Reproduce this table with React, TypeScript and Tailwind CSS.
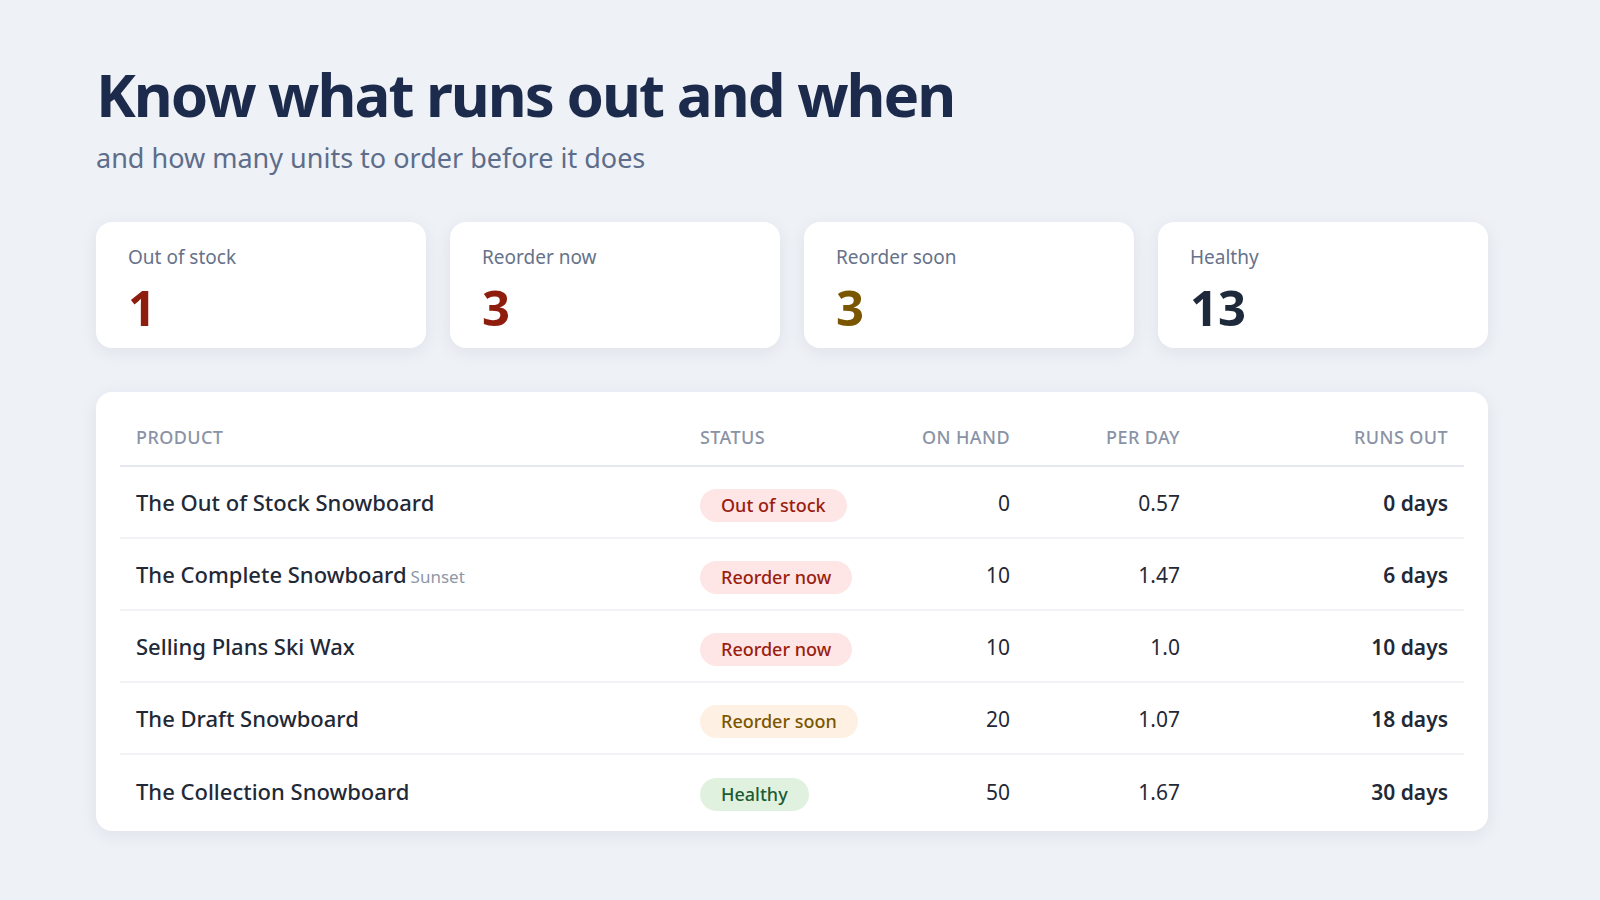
import React from 'react';

type Status = 'out' | 'now' | 'soon' | 'healthy';

interface Row {
  name: string;
  variant?: string;
  status: Status;
  onHand: number;
  perDay: string;
  runsOut: string;
}

const rows: Row[] = [
  { name: 'The Out of Stock Snowboard', status: 'out', onHand: 0, perDay: '0.57', runsOut: '0 days' },
  { name: 'The Complete Snowboard', variant: 'Sunset', status: 'now', onHand: 10, perDay: '1.47', runsOut: '6 days' },
  { name: 'Selling Plans Ski Wax', status: 'now', onHand: 10, perDay: '1.0', runsOut: '10 days' },
  { name: 'The Draft Snowboard', status: 'soon', onHand: 20, perDay: '1.07', runsOut: '18 days' },
  { name: 'The Collection Snowboard', status: 'healthy', onHand: 50, perDay: '1.67', runsOut: '30 days' },
];

const badge: Record<Status, { label: string; cls: string }> = {
  out: { label: 'Out of stock', cls: 'bg-[#fde6e5] text-[#9a1d10]' },
  now: { label: 'Reorder now', cls: 'bg-[#fde6e5] text-[#9a1d10]' },
  soon: { label: 'Reorder soon', cls: 'bg-[#fef0e2] text-[#7a5600]' },
  healthy: { label: 'Healthy', cls: 'bg-[#e1f1df] text-[#1c5c33]' },
};

const stats = [
  { label: 'Out of stock', value: '1', cls: 'text-[#8f1d0d]' },
  { label: 'Reorder now', value: '3', cls: 'text-[#8f1d0d]' },
  { label: 'Reorder soon', value: '3', cls: 'text-[#7a5600]' },
  { label: 'Healthy', value: '13', cls: 'text-[#1e293b]' },
];

const cols = 'grid grid-cols-[564px_196px_146px_170px_1fr]';

export default function App() {
  return (
    <div className="min-h-[900px] w-full bg-[#eef1f6] font-['Noto_Sans',sans-serif]">
      <div className="ml-24 w-[1392px] pt-16">
        {/* heading */}
        <h1 className="text-[60px] font-bold leading-none tracking-[-2px] text-[#1c2a4b]">
          Know what runs out and when
        </h1>
        <p className="mt-[17px] text-[27px] leading-[34px] text-[#5d6d8a]">
          and how many units to order before it does
        </p>

        {/* stat cards */}
        <div className="mt-[47px] grid grid-cols-4 gap-6">
          {stats.map((s) => (
            <div
              key={s.label}
              className="h-[126px] rounded-2xl bg-white px-8 pt-[22px] shadow-[0_4px_18px_rgba(30,41,72,0.07)]"
            >
              <div className="text-[19px] leading-[26px] text-[#66728a]">{s.label}</div>
              <div className={`mt-[12px] text-[49px] font-bold leading-[50px] ${s.cls}`}>{s.value}</div>
            </div>
          ))}
        </div>

        {/* table */}
        <div className="mt-[44px] rounded-2xl bg-white px-6 pb-1 pt-6 shadow-[0_4px_18px_rgba(30,41,72,0.07)]">
          <div className={`${cols} border-b-2 border-[#e5e9ef] pb-[17px] pt-[10px] text-[18px] font-medium uppercase leading-[22px] tracking-[0.4px] text-[#8a93a6]`}>
            <div className="px-4">Product</div>
            <div className="px-4">Status</div>
            <div className="px-4 text-right">On hand</div>
            <div className="px-4 text-right">Per day</div>
            <div className="px-4 text-right">Runs out</div>
          </div>
          {rows.map((r, i) => (
            <div
              key={r.name}
              className={`${cols} h-[72px] items-center text-[21px] text-[#1f2937] ${
                i < rows.length - 1 ? 'border-b-2 border-[#f0f2f6]' : ''
              }`}
            >
              <div className="px-4 text-[22px] font-medium">
                {r.name}
                {r.variant && <span className="ml-1 text-[17px] font-normal text-[#8e97a9]">{r.variant}</span>}
              </div>
              <div className="px-4">
                <span
                  className={`mt-1.5 inline-flex h-[33px] items-center rounded-full px-[21px] text-[18px] font-medium ${badge[r.status].cls}`}
                >
                  {badge[r.status].label}
                </span>
              </div>
              <div className="mt-1 px-4 text-right">{r.onHand}</div>
              <div className="mt-1 px-4 text-right">{r.perDay}</div>
              <div className="mt-1 px-4 text-right font-semibold">{r.runsOut}</div>
            </div>
          ))}
        </div>
      </div>
    </div>
  );
}
